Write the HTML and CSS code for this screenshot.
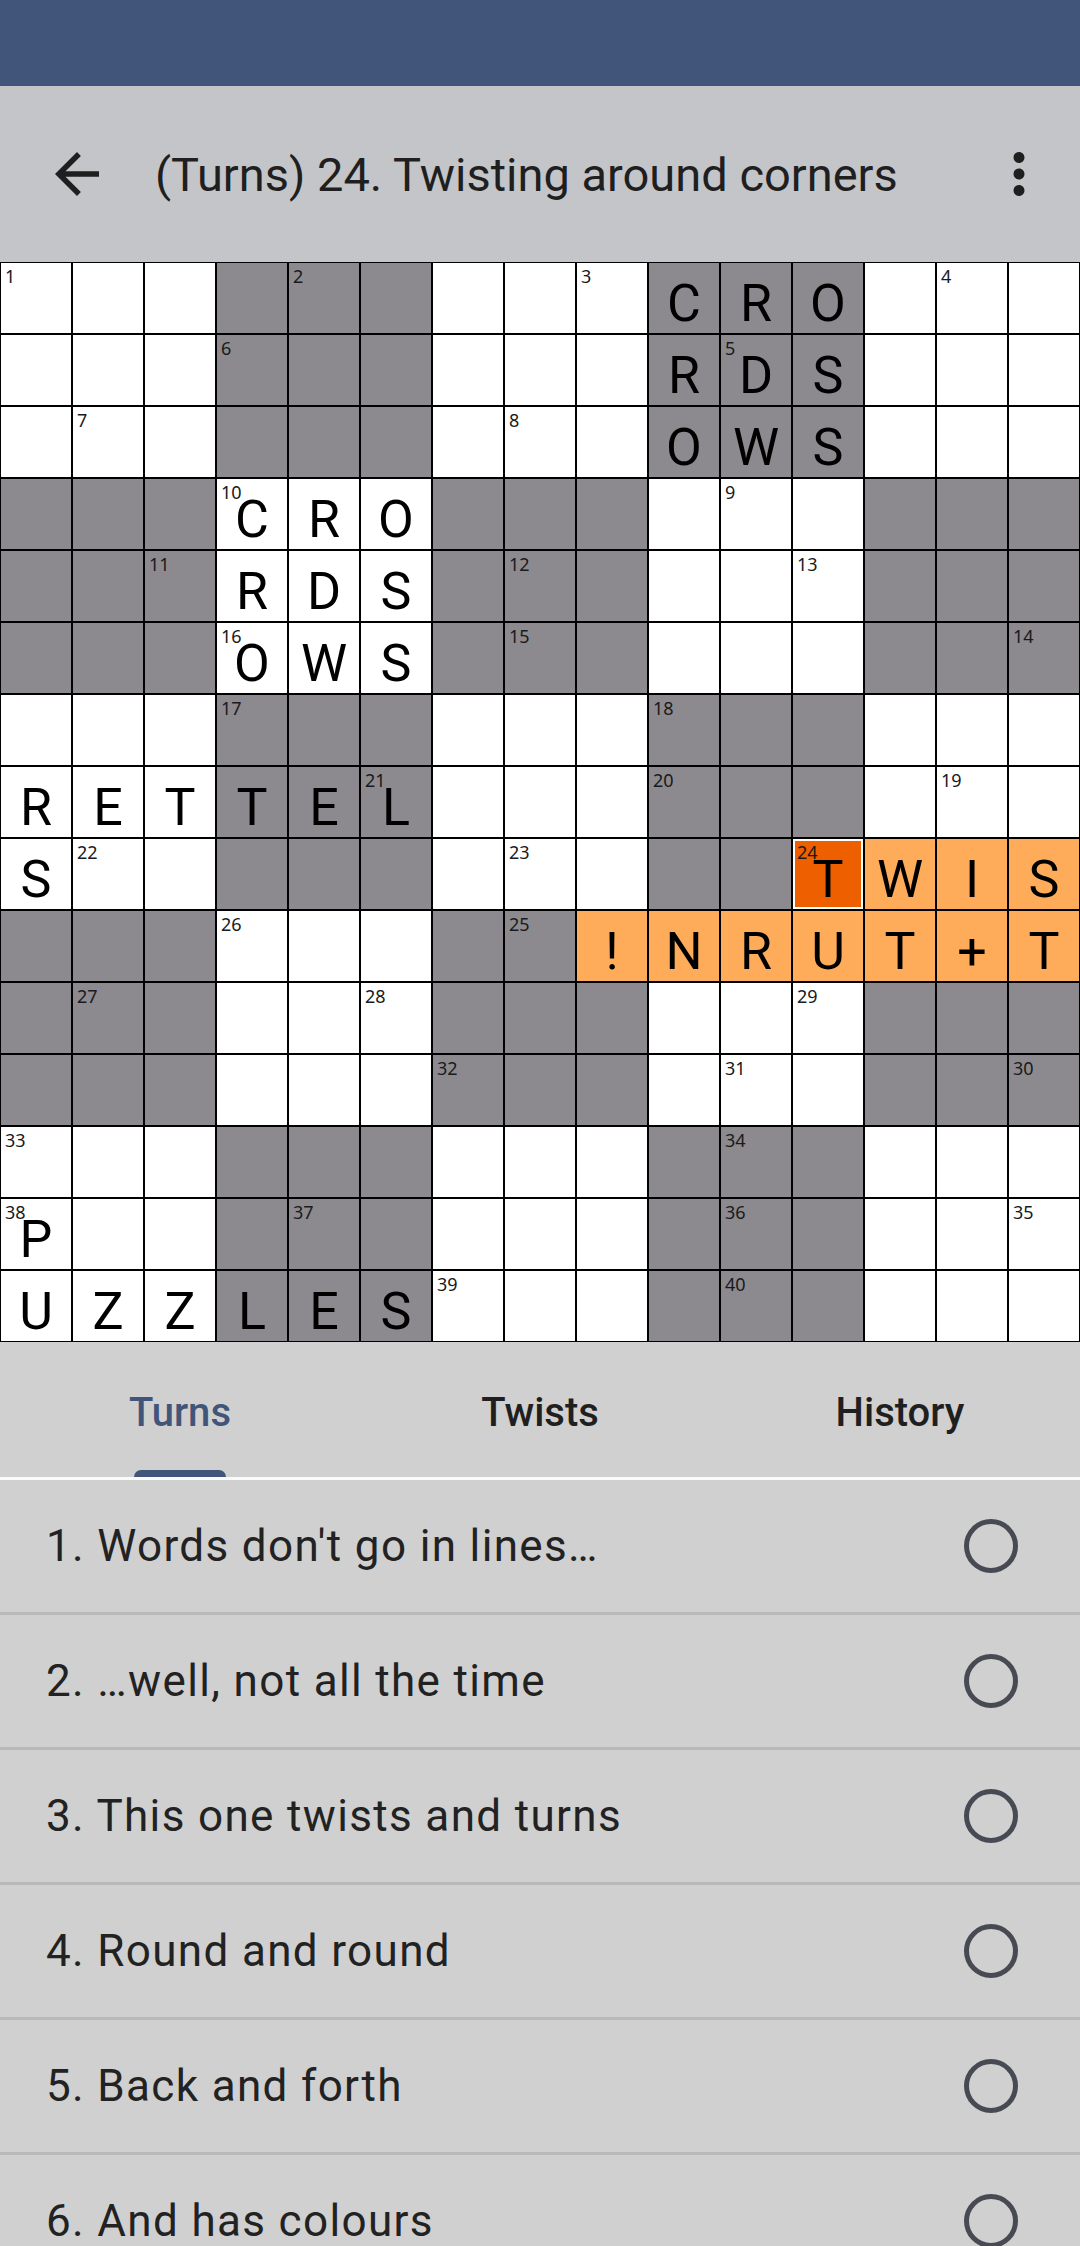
FILE: index.html
```html
<!DOCTYPE html>
<html lang="en">
<head>
<meta charset="utf-8">
<title>Crossword</title>
<link rel="stylesheet" href="styles.css">
</head>
<body>
<div class="status"></div>
<header class="appbar">
  <svg class="icon back" viewBox="0 0 24 24"><path d="M20 11H7.83l5.59-5.59L12 4l-8 8 8 8 1.41-1.41L7.83 13H20v-2z"/></svg>
  <div class="title">(Turns) 24. Twisting around corners</div>
  <svg class="icon more" viewBox="0 0 24 24"><path d="M12 8c1.1 0 2-.9 2-2s-.9-2-2-2-2 .9-2 2 .9 2 2 2zm0 2c-1.1 0-2 .9-2 2s.9 2 2 2 2-.9 2-2-.9-2-2-2zm0 6c-1.1 0-2 .9-2 2s.9 2 2 2 2-.9 2-2-.9-2-2-2z"/></svg>
</header>
<main class="board">
  <!-- row 0 -->
  <div class="c"><span class="n">1</span></div><div class="c"></div><div class="c"></div><div class="c b"></div><div class="c b"><span class="n">2</span></div><div class="c b"></div><div class="c"></div><div class="c"></div><div class="c"><span class="n">3</span></div><div class="c b"><span class="l">C</span></div><div class="c b"><span class="l">R</span></div><div class="c b"><span class="l">O</span></div><div class="c"></div><div class="c"><span class="n">4</span></div><div class="c"></div>
  <!-- row 1 -->
  <div class="c"></div><div class="c"></div><div class="c"></div><div class="c b"><span class="n">6</span></div><div class="c b"></div><div class="c b"></div><div class="c"></div><div class="c"></div><div class="c"></div><div class="c b"><span class="l">R</span></div><div class="c b"><span class="n">5</span><span class="l">D</span></div><div class="c b"><span class="l">S</span></div><div class="c"></div><div class="c"></div><div class="c"></div>
  <!-- row 2 -->
  <div class="c"></div><div class="c"><span class="n">7</span></div><div class="c"></div><div class="c b"></div><div class="c b"></div><div class="c b"></div><div class="c"></div><div class="c"><span class="n">8</span></div><div class="c"></div><div class="c b"><span class="l">O</span></div><div class="c b"><span class="l">W</span></div><div class="c b"><span class="l">S</span></div><div class="c"></div><div class="c"></div><div class="c"></div>
  <!-- row 3 -->
  <div class="c b"></div><div class="c b"></div><div class="c b"></div><div class="c"><span class="n">10</span><span class="l">C</span></div><div class="c"><span class="l">R</span></div><div class="c"><span class="l">O</span></div><div class="c b"></div><div class="c b"></div><div class="c b"></div><div class="c"></div><div class="c"><span class="n">9</span></div><div class="c"></div><div class="c b"></div><div class="c b"></div><div class="c b"></div>
  <!-- row 4 -->
  <div class="c b"></div><div class="c b"></div><div class="c b"><span class="n">11</span></div><div class="c"><span class="l">R</span></div><div class="c"><span class="l">D</span></div><div class="c"><span class="l">S</span></div><div class="c b"></div><div class="c b"><span class="n">12</span></div><div class="c b"></div><div class="c"></div><div class="c"></div><div class="c"><span class="n">13</span></div><div class="c b"></div><div class="c b"></div><div class="c b"></div>
  <!-- row 5 -->
  <div class="c b"></div><div class="c b"></div><div class="c b"></div><div class="c"><span class="n">16</span><span class="l">O</span></div><div class="c"><span class="l">W</span></div><div class="c"><span class="l">S</span></div><div class="c b"></div><div class="c b"><span class="n">15</span></div><div class="c b"></div><div class="c"></div><div class="c"></div><div class="c"></div><div class="c b"></div><div class="c b"></div><div class="c b"><span class="n">14</span></div>
  <!-- row 6 -->
  <div class="c"></div><div class="c"></div><div class="c"></div><div class="c b"><span class="n">17</span></div><div class="c b"></div><div class="c b"></div><div class="c"></div><div class="c"></div><div class="c"></div><div class="c b"><span class="n">18</span></div><div class="c b"></div><div class="c b"></div><div class="c"></div><div class="c"></div><div class="c"></div>
  <!-- row 7 -->
  <div class="c"><span class="l">R</span></div><div class="c"><span class="l">E</span></div><div class="c"><span class="l">T</span></div><div class="c b"><span class="l">T</span></div><div class="c b"><span class="l">E</span></div><div class="c b"><span class="n">21</span><span class="l">L</span></div><div class="c"></div><div class="c"></div><div class="c"></div><div class="c b"><span class="n">20</span></div><div class="c b"></div><div class="c b"></div><div class="c"></div><div class="c"><span class="n">19</span></div><div class="c"></div>
  <!-- row 8 -->
  <div class="c"><span class="l">S</span></div><div class="c"><span class="n">22</span></div><div class="c"></div><div class="c b"></div><div class="c b"></div><div class="c b"></div><div class="c"></div><div class="c"><span class="n">23</span></div><div class="c"></div><div class="c b"></div><div class="c b"></div><div class="c s"><span class="n">24</span><span class="l">T</span></div><div class="c h"><span class="l">W</span></div><div class="c h"><span class="l">I</span></div><div class="c h"><span class="l">S</span></div>
  <!-- row 9 -->
  <div class="c b"></div><div class="c b"></div><div class="c b"></div><div class="c"><span class="n">26</span></div><div class="c"></div><div class="c"></div><div class="c b"></div><div class="c b"><span class="n">25</span></div><div class="c h"><span class="l">!</span></div><div class="c h"><span class="l">N</span></div><div class="c h"><span class="l">R</span></div><div class="c h"><span class="l">U</span></div><div class="c h"><span class="l">T</span></div><div class="c h"><span class="l">+</span></div><div class="c h"><span class="l">T</span></div>
  <!-- row 10 -->
  <div class="c b"></div><div class="c b"><span class="n">27</span></div><div class="c b"></div><div class="c"></div><div class="c"></div><div class="c"><span class="n">28</span></div><div class="c b"></div><div class="c b"></div><div class="c b"></div><div class="c"></div><div class="c"></div><div class="c"><span class="n">29</span></div><div class="c b"></div><div class="c b"></div><div class="c b"></div>
  <!-- row 11 -->
  <div class="c b"></div><div class="c b"></div><div class="c b"></div><div class="c"></div><div class="c"></div><div class="c"></div><div class="c b"><span class="n">32</span></div><div class="c b"></div><div class="c b"></div><div class="c"></div><div class="c"><span class="n">31</span></div><div class="c"></div><div class="c b"></div><div class="c b"></div><div class="c b"><span class="n">30</span></div>
  <!-- row 12 -->
  <div class="c"><span class="n">33</span></div><div class="c"></div><div class="c"></div><div class="c b"></div><div class="c b"></div><div class="c b"></div><div class="c"></div><div class="c"></div><div class="c"></div><div class="c b"></div><div class="c b"><span class="n">34</span></div><div class="c b"></div><div class="c"></div><div class="c"></div><div class="c"></div>
  <!-- row 13 -->
  <div class="c"><span class="n">38</span><span class="l">P</span></div><div class="c"></div><div class="c"></div><div class="c b"></div><div class="c b"><span class="n">37</span></div><div class="c b"></div><div class="c"></div><div class="c"></div><div class="c"></div><div class="c b"></div><div class="c b"><span class="n">36</span></div><div class="c b"></div><div class="c"></div><div class="c"></div><div class="c"><span class="n">35</span></div>
  <!-- row 14 -->
  <div class="c"><span class="l">U</span></div><div class="c"><span class="l">Z</span></div><div class="c"><span class="l">Z</span></div><div class="c b"><span class="l">L</span></div><div class="c b"><span class="l">E</span></div><div class="c b"><span class="l">S</span></div><div class="c"><span class="n">39</span></div><div class="c"></div><div class="c"></div><div class="c b"></div><div class="c b"><span class="n">40</span></div><div class="c b"></div><div class="c"></div><div class="c"></div><div class="c"></div>
</main>
<nav class="tabs">
  <div class="tab active">Turns<span class="indicator"></span></div>
  <div class="tab">Twists</div>
  <div class="tab">History</div>
</nav>
<div class="divider"></div>
<ul class="clues">
  <li class="item"><span class="clue">1. Words don't go in lines…</span><span class="radio"></span></li>
  <li class="item"><span class="clue">2. …well, not all the time</span><span class="radio"></span></li>
  <li class="item"><span class="clue">3. This one twists and turns</span><span class="radio"></span></li>
  <li class="item"><span class="clue">4. Round and round</span><span class="radio"></span></li>
  <li class="item"><span class="clue">5. Back and forth</span><span class="radio"></span></li>
  <li class="item"><span class="clue">6. And has colours</span><span class="radio"></span></li>
</ul>
</body>
</html>
```
FILE: styles.css
```css
html, body {
  margin: 0;
  padding: 0;
}
body {
  width: 1080px;
  height: 2246px;
  overflow: hidden;
  background: #d0d0d0;
  font-family: Roboto, "Noto Sans", sans-serif;
  color: #1f1f1f;
}
.status {
  height: 86px;
  background: #41557a;
}
.appbar {
  height: 176px;
  background: #c4c5c9;
  display: flex;
  align-items: center;
}
.icon {
  width: 66px;
  height: 66px;
  flex: none;
  fill: #1f1f1f;
}
.back {
  margin-left: 44px;
}
.more {
  margin-right: 28px;
}
.title {
  flex: 1;
  margin-left: 45px;
  font-size: 47px;
  line-height: 1;
  padding-top: 1px;
  white-space: nowrap;
}
.board {
  display: grid;
  grid-template-columns: repeat(15, 70px);
  grid-auto-rows: 70px;
  gap: 2px;
  padding: 1px;
  background: #000;
  width: 1080px;
  height: 1080px;
  box-sizing: border-box;
}
.c {
  background: #fff;
  position: relative;
  display: flex;
  justify-content: center;
}
.b {
  background: #8c8a8e;
}
.h {
  background: #feac5a;
}
.s {
  background: #ee5f00;
  box-shadow: inset 0 0 0 2px #fff;
}
.n {
  position: absolute;
  top: 4px;
  left: 4px;
  font-family: "Noto Sans", sans-serif;
  font-size: 18px;
  line-height: 1;
  color: #1a1a1a;
}
.l {
  font-family: Roboto, sans-serif;
  font-size: 52px;
  line-height: 1;
  padding-top: 15px;
  color: #000;
}
.tabs {
  display: flex;
  height: 135px;
  background: #d0d0d0;
}
.tab {
  flex: 1;
  text-align: center;
  font-size: 40px;
  font-weight: 500;
  line-height: 40px;
  padding-top: 51px;
  color: #1f1f1f;
  position: relative;
}
.tab.active {
  color: #41557a;
}
.indicator {
  position: absolute;
  bottom: 0;
  left: 50%;
  width: 92px;
  margin-left: -46px;
  height: 7px;
  border-radius: 7px 7px 0 0;
  background: #41557a;
}
.divider {
  height: 3px;
  background: #fafafa;
}
.clues {
  list-style: none;
  margin: 0;
  padding: 0;
}
.item {
  height: 132px;
  border-bottom: 3px solid #b9b9b9;
  display: flex;
  align-items: center;
  padding-left: 46px;
  background: #d0d0d0;
}
.clue {
  flex: 1;
  font-size: 44px;
  letter-spacing: 1.35px;
  color: #222;
}
.radio {
  width: 54px;
  height: 54px;
  box-sizing: border-box;
  border: 5px solid #474a53;
  border-radius: 50%;
  margin-right: 62px;
  flex: none;
}
```
